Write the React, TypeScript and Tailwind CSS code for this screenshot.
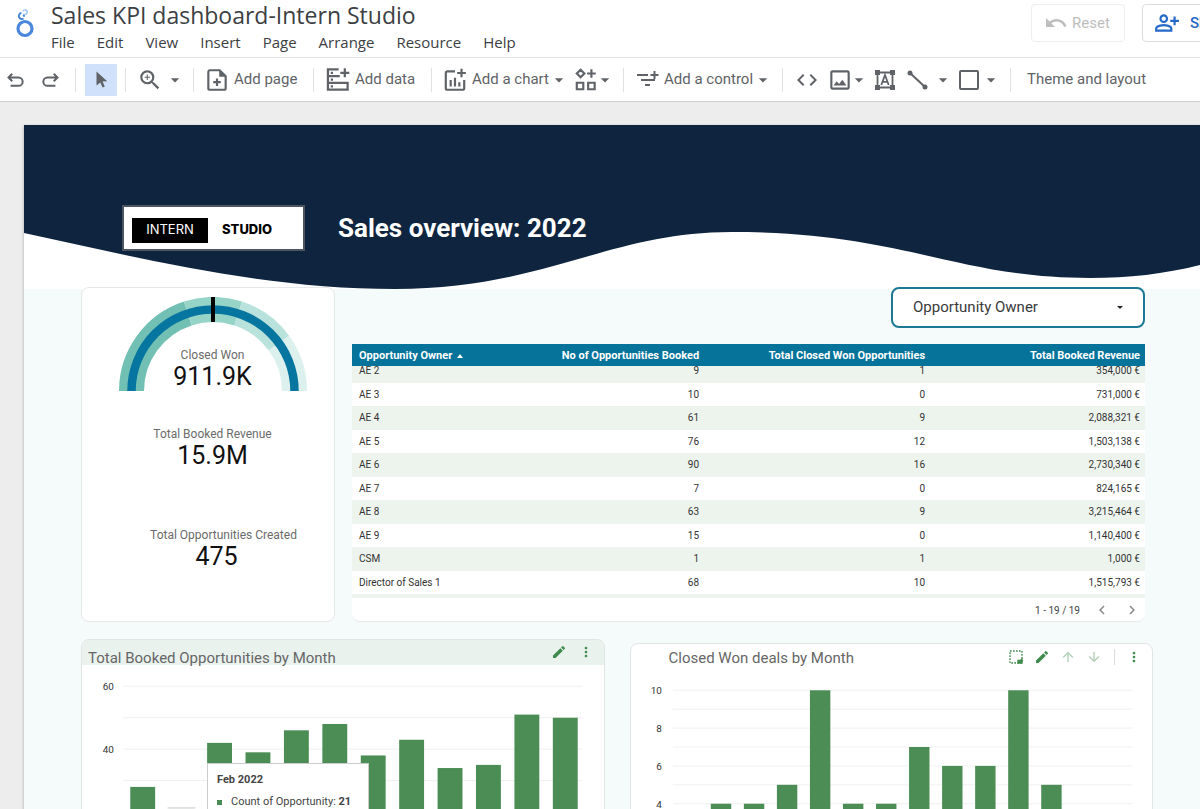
import { useLayoutEffect, useRef } from "react";
import type { ReactNode } from "react";
import {
  MdArrowDownward,
  MdArrowDropDown,
  MdArrowUpward,
  MdChevronLeft,
  MdChevronRight,
  MdCode,
  MdEdit,
  MdMoreVert,
  MdOutlineImage,
  MdOutlinePersonAddAlt,
  MdUndo,
  MdZoomIn,
} from "react-icons/md";

const menus = ["File", "Edit", "View", "Insert", "Page", "Arrange", "Resource", "Help"];

const rows = [
  ["AE 2", "9", "1", "354,000 €"],
  ["AE 3", "10", "0", "731,000 €"],
  ["AE 4", "61", "9", "2,088,321 €"],
  ["AE 5", "76", "12", "1,503,138 €"],
  ["AE 6", "90", "16", "2,730,340 €"],
  ["AE 7", "7", "0", "824,165 €"],
  ["AE 8", "63", "9", "3,215,464 €"],
  ["AE 9", "15", "0", "1,140,400 €"],
  ["CSM", "1", "1", "1,000 €"],
  ["Director of Sales 1", "68", "10", "1,515,793 €"],
];

const bookedByMonth = [28, 21, 42, 39, 46, 48, 38, 43, 34, 35, 51, 50];
const wonByMonth = [0, 4, 4, 5, 10, 4, 4, 7, 6, 6, 10, 5];

function Logo() {
  return (
    <svg className="h-8 w-6 shrink-0" viewBox="0 0 24 32" fill="none" aria-hidden="true">
      <circle cx="13" cy="20.500" r="7" stroke="#4a86dc" strokeWidth="3.2" />
      <path d="M11.600 10.500A3 3 0 1 1 9.500 5.100M11.300 6.500a3 3 0 0 1 .8 2.200" stroke="#4a86dc" strokeWidth="2" />
      <path d="M10.800 3.200a2.300 2.300 0 1 1 2 3.300" stroke="#9cc0f2" strokeWidth="1.400" />
    </svg>
  );
}

function Icon({ children, className = "size-6" }: { children: ReactNode; className?: string }) {
  return (
    <svg
      viewBox="0 0 24 24"
      fill="none"
      stroke="currentColor"
      strokeWidth="2"
      className={`shrink-0 ${className}`}
      aria-hidden="true"
    >
      {children}
    </svg>
  );
}

function Caret() {
  return <MdArrowDropDown className="-mx-1 size-5 shrink-0" />;
}

function Tool({ label, children, className = "" }: { label: string; children: ReactNode; className?: string }) {
  return (
    <button type="button" aria-label={label} className={`flex h-8 shrink-0 items-center whitespace-nowrap ${className}`}>
      {children}
    </button>
  );
}

function Divider() {
  return <span className="h-6 w-px shrink-0 bg-[#dfe1e3]" />;
}

function Toolbar() {
  return (
    <div className="flex h-11 items-center border-b border-[#cfcfcf] bg-white text-[15px] text-[#5f6368]">
      <div className="flex w-[75px] shrink-0 items-center gap-[14px] pl-[6px]">
        <Tool label="Undo">
          <Icon className="size-5">
            <path d="M7.5 4.500 3 9l4.500 4.500M3.500 9H15a5 5 0 0 1 0 10H5.500" strokeWidth="2.400" />
          </Icon>
        </Tool>
        <Tool label="Redo">
          <Icon className="size-5">
            <path d="M16.500 4.500 21 9l-4.500 4.500M20.500 9H9a5 5 0 0 0 0 10h9.500" strokeWidth="2.400" />
          </Icon>
        </Tool>
      </div>
      <Divider />
      <div className="flex w-[49px] shrink-0 justify-center">
        <Tool label="Select" className="w-8 justify-center bg-[#d0e1fb]">
          <Icon>
            <path d="M7.500 3.500v14l3.800-3 2.300 5 2.200-1-2.300-5 4.700-.3z" fill="currentColor" stroke="none" />
          </Icon>
        </Tool>
      </div>
      <Divider />
      <div className="flex w-[67px] shrink-0 items-center pl-[11px]">
        <Tool label="Zoom" className="gap-[6px]">
          <MdZoomIn className="size-[26px]" />
          <Caret />
        </Tool>
      </div>
      <Divider />
      <div className="flex w-[119px] shrink-0 items-center pl-[10px]">
        <Tool label="Add page" className="gap-1">
          <Icon className="size-[26px]">
            <path d="M14.500 3H5.500A1.500 1.500 0 0 0 4 4.500v15A1.500 1.500 0 0 0 5.500 21h13a1.500 1.500 0 0 0 1.500-1.500V8.500z" />
            <path d="M14 3v6h6z" fill="currentColor" stroke="none" />
            <path d="M12 10.500v7M8.500 14h7" />
          </Icon>
          Add page
        </Tool>
      </div>
      <Divider />
      <div className="flex w-[117px] shrink-0 items-center pl-[10px]">
        <Tool label="Add data" className="gap-1">
          <Icon className="size-[27px]">
            <path d="M13 3H3.500v18H21v-6H3.500M3.500 9H14" />
            <path d="M18.500 2v8M14.500 6h8" />
            <path d="M6 6h2M6 12h2M6 18h2" />
          </Icon>
          Add data
        </Tool>
      </div>
      <Divider />
      <div className="flex w-[191px] shrink-0 items-center gap-2 pl-[10px]">
        <Tool label="Add a chart" className="gap-1">
          <Icon className="size-[26px]">
            <path d="M12 4H5a1.500 1.500 0 0 0-1.500 1.500v14A1.500 1.500 0 0 0 5 21h14a1.500 1.500 0 0 0 1.500-1.500V12" />
            <path d="M18 1.500v8M14 5.500h8M8 12v6M12 10v8M16 14v4" />
          </Icon>
          Add a chart
          <Caret />
        </Tool>
        <Tool label="Community visualizations">
          <Icon className="size-[26px]">
            <path d="M7 2.500 10.500 6 7 9.500 3.500 6zM17 2v8M13 6h8M3.500 14.500H9.500v6H3.500zM14 14.500h6v6H14z" />
          </Icon>
          <Caret />
        </Tool>
      </div>
      <Divider />
      <div className="flex w-[158px] shrink-0 items-center pl-3">
        <Tool label="Add a control" className="gap-1">
          <Icon className="size-6">
            <path d="M1 7h11M5 12h14M9 17h5M18.500 3v8M14.500 7h8" />
          </Icon>
          Add a control
          <Caret />
        </Tool>
      </div>
      <Divider />
      <div className="flex w-[227px] shrink-0 items-center gap-2 pl-3">
        <Tool label="Embed URL">
          <MdCode className="size-6" />
        </Tool>
        <Tool label="Image">
          <MdOutlineImage className="size-[26px]" />
          <Caret />
        </Tool>
        <Tool label="Text">
          <Icon>
            <path d="M4.500 4.500h15v15h-15z" strokeWidth="1.800" />
            <path d="M2 2h5v5H2zM17 2h5v5h-5zM2 17h5v5H2zM17 17h5v5h-5z" fill="currentColor" stroke="none" />
            <path d="m8.300 17 3.700-10 3.700 10M9.500 13.800h5" strokeWidth="1.800" />
          </Icon>
        </Tool>
        <Tool label="Line" className="gap-2">
          <Icon>
            <path d="m5 5 15 14" />
            <circle cx="5" cy="5" r="2.500" fill="currentColor" stroke="none" />
            <circle cx="20" cy="19" r="2.500" fill="currentColor" stroke="none" />
          </Icon>
          <Caret />
        </Tool>
        <Tool label="Shape" className="gap-1">
          <Icon>
            <rect x="3" y="3" width="18" height="18" rx="1" />
          </Icon>
          <Caret />
        </Tool>
      </div>
      <Divider />
      <Tool label="Theme and layout" className="pl-4">
        Theme and layout
      </Tool>
    </div>
  );
}

function AppHeader() {
  return (
    <header className="flex h-[58px] items-start border-b border-[#e0e0e0] bg-white">
      <div className="flex shrink-0 pt-2 pl-3">
        <Logo />
      </div>
      <div className="flex min-w-0 flex-1 flex-col gap-[2px] pl-[15px]">
        <h1 className="font-['Open_Sans'] text-[23px] leading-[30px] whitespace-nowrap text-[#3c4043]">
          Sales KPI dashboard-Intern Studio
        </h1>
        <nav className="flex gap-[22px] font-['Open_Sans'] text-[15px] leading-5 text-[#3c4043]">
          {menus.map((m) => (
            <button type="button" key={m}>
              {m}
            </button>
          ))}
        </nav>
      </div>
      <div className="flex shrink-0 gap-[17px] overflow-hidden pt-1">
        <button
          type="button"
          disabled
          className="flex h-[38px] w-[94px] items-center gap-1 rounded border border-[#eeeeee] pl-3 text-[15px] text-[#bdbdbd]"
        >
          <MdUndo className="size-6" />
          Reset
        </button>
        <button
          type="button"
          className="-mr-8 flex h-[38px] w-[90px] items-center gap-[10px] rounded border border-[#dadce0] pl-[11px] text-[15px] font-medium text-[#2468c8]"
        >
          <MdOutlinePersonAddAlt className="size-[26px]" />
          Share
        </button>
      </div>
    </header>
  );
}

function polar(r: number, deg: number) {
  const a = (deg * Math.PI) / 180;
  return `${(94 + r * Math.cos(a)).toFixed(2)} ${(94 - r * Math.sin(a)).toFixed(2)}`;
}

function Arc({ r, from, to, width, color }: { r: number; from: number; to: number; width: number; color: string }) {
  return <path d={`M${polar(r, from)}A${r} ${r} 0 0 1 ${polar(r, to)}`} stroke={color} strokeWidth={width} fill="none" />;
}

function Gauge() {
  return (
    <svg viewBox="0 0 188 94" className="h-[94px] w-[188px] [grid-area:1/1]" aria-hidden="true">
      <Arc r={81.5} from={180} to={108} width={25} color="#72c0b4" />
      <Arc r={81.5} from={108} to={72} width={25} color="#96d4c8" />
      <Arc r={81.5} from={72} to={36} width={25} color="#b9e2dc" />
      <Arc r={81.5} from={36} to={0} width={25} color="#dcf0ed" />
      <Arc r={81.5} from={180} to={0} width={8.5} color="#06759f" />
      <path d="M94 0v25" stroke="#000" strokeWidth="4" />
    </svg>
  );
}

function Metric({ label, value, labelClass = "" }: { label: string; value: string; labelClass?: string }) {
  return (
    <div className="flex flex-col items-center">
      <span className={`text-[12px] leading-4 text-[#6b6b6b] ${labelClass}`}>{label}</span>
      <span className="text-[25px] leading-7 text-[#111111]">{value}</span>
    </div>
  );
}

function KpiCard() {
  return (
    <section className="flex w-[254px] shrink-0 flex-col items-center rounded-lg border border-[#e4e8e8] bg-white pt-[9px] pl-[9px]">
      <div className="grid items-end justify-items-center">
        <Gauge />
        <div className="[grid-area:1/1]">
          <Metric label="Closed Won" value="911.9K" />
        </div>
      </div>
      <div className="pt-[35px]">
        <Metric label="Total Booked Revenue" value="15.9M" />
      </div>
      <div className="pt-[57px] pl-[8px]">
        <Metric label="Total Opportunities Created" value="475" labelClass="pl-[14px]" />
      </div>
    </section>
  );
}

function OwnerTable() {
  const scroller = useRef<HTMLDivElement>(null);
  useLayoutEffect(() => {
    if (scroller.current) scroller.current.scrollTop = 7;
  }, []);
  const cell = "pb-0 pl-0 pr-[5px] text-right";
  const head = "bg-[#06739b] pt-[2px] font-bold whitespace-nowrap";
  return (
    <section className="overflow-hidden rounded-b-lg border-b border-[#e4e8e8] bg-white">
      <div ref={scroller} className="h-[254px] overflow-hidden">
        <table className="w-full table-fixed border-separate border-spacing-0 text-[10px] leading-3 text-[#333333]">
          <colgroup>
            <col className="w-[22%]" />
            <col className="w-[22.4%]" />
            <col className="w-[28.5%]" />
            <col className="w-[27.1%]" />
          </colgroup>
          <thead className="sticky top-0 text-[11px] text-white">
            <tr className="h-[22px]">
              <th className={`pr-0 pb-0 pl-[7px] text-left ${head}`}>
                <button type="button" className="flex items-center gap-[5px]">
                  Opportunity Owner
                  <svg viewBox="0 0 6 4" className="h-1 w-[6px]" aria-hidden="true">
                    <path d="M0 4 3 0l3 4z" fill="#fff" />
                  </svg>
                </button>
              </th>
              <th className={`${head} ${cell}`}>No of Opportunities Booked</th>
              <th className={`${head} ${cell}`}>Total Closed Won Opportunities</th>
              <th className={`${head} ${cell}`}>Total Booked Revenue</th>
            </tr>
          </thead>
          <tbody>
            {rows.map((r) => (
              <tr key={r[0]} className="h-6 odd:bg-[#edf3ed] even:h-[23px]">
                <td className="p-0 pl-[7px]">{r[0]}</td>
                <td className={`pt-0 ${cell}`}>{r[1]}</td>
                <td className={`pt-0 ${cell}`}>{r[2]}</td>
                <td className={`pt-0 ${cell}`}>{r[3]}</td>
              </tr>
            ))}
            <tr className="h-6 bg-[#edf3ed]">
              <td colSpan={4} className="p-0" />
            </tr>
          </tbody>
        </table>
      </div>
      <div className="flex h-[23px] items-center justify-end pt-px pr-1 text-[10px] text-[#444444]">
        <span className="pr-[13px]">1 - 19 / 19</span>
        <button type="button" aria-label="Previous page" className="mr-3 text-[#8a8a8a]">
          <MdChevronLeft className="size-[18px]" />
        </button>
        <button type="button" aria-label="Next page" className="text-[#8a8a8a]">
          <MdChevronRight className="size-[18px]" />
        </button>
      </div>
    </section>
  );
}

function OwnerFilter() {
  return (
    <div className="grid h-[41px] w-[254px] items-center self-end">
      <select
        aria-label="Opportunity Owner filter"
        className="h-full w-full appearance-none rounded-lg border-2 border-[#1d7893] bg-white pl-5 text-[15px] text-[#3a3a3a] [grid-area:1/1]"
      >
        <option>Opportunity Owner</option>
      </select>
      <svg viewBox="0 0 6 3" className="pointer-events-none mr-[22px] h-[3px] w-[6px] justify-self-end [grid-area:1/1]" aria-hidden="true">
        <path d="M0 0h6L3 3z" fill="#222" />
      </svg>
    </div>
  );
}

function BookedChart() {
  const y = (v: number) => 46.5 + (60 - v) * 3.16;
  return (
    <svg viewBox="0 0 524 260" className="block w-full" role="img" aria-label="Booked opportunities by month">
      {[60, 50, 40, 30, 20, 10, 0].map((v) => (
        <path key={v} d={`M41 ${y(v)}H503`} stroke="#f0f0f0" strokeWidth="1" />
      ))}
      {[60, 40, 20, 0].map((v) => (
        <text key={v} x="32" y={y(v) + 4} textAnchor="end" fontSize="10" fill="#333">
          {v}
        </text>
      ))}
      {bookedByMonth.map((v, i) => (
        <rect key={i} x={48.5 + i * 38.6} y={y(v)} width="25" height={v * 3.16} fill="#4b8d55" />
      ))}
      <path d={`M86 ${y(21) - 1}h28`} stroke="#cccccc" strokeWidth="1" />
    </svg>
  );
}

function WonChart() {
  const y = (v: number) => 46.5 + (10 - v) * 19;
  return (
    <svg viewBox="0 0 524 260" className="block w-full" role="img" aria-label="Closed won deals by month">
      {[10, 9, 8, 7, 6, 5, 4, 3, 2, 1, 0].map((v) => (
        <path key={v} d={`M42 ${y(v)}H504`} stroke="#f0f0f0" strokeWidth="1" />
      ))}
      {[10, 8, 6, 4, 2, 0].map((v) => (
        <text key={v} x="31" y={y(v) + 4} textAnchor="end" fontSize="10" fill="#333">
          {v}
        </text>
      ))}
      {wonByMonth.map((v, i) => (
        <rect key={i} x={47 + i * 33.2} y={y(v)} width="20.500" height={v * 19} fill="#4b8d55" />
      ))}
    </svg>
  );
}

function BookedCard() {
  return (
    <section className="grid grid-rows-[auto_1fr] overflow-hidden rounded-t-lg border border-[#dfe6e4] bg-white">
      <div className="flex h-[25px] items-start bg-[#eaf2ee] pl-[6px] [grid-area:1/1]">
        <h2 className="flex-1 pt-2 text-[15px] leading-5 text-[#666666]">Total Booked Opportunities by Month</h2>
        <div className="flex items-center gap-[11px] pt-1 pr-[10px] text-[#3f8a4d]">
          <button type="button" aria-label="Edit chart">
            <MdEdit className="size-4" />
          </button>
          <button type="button" aria-label="More options">
            <MdMoreVert className="size-4" />
          </button>
        </div>
      </div>
      <div className="relative -mt-[25px] [grid-area:2/1]">
        <BookedChart />
        <div className="absolute top-[123px] left-[125px] flex w-[162px] flex-col gap-2 border border-[#cccccc] bg-white px-[9px] pt-[9px] pb-3 text-[11px] leading-[14px] text-[#444444]">
          <strong>Feb 2022</strong>
          <span className="flex items-center whitespace-nowrap">
            <span className="mr-[9px] size-[5px] bg-[#4b8d55]" />
            Count of Opportunity:&nbsp;<b>21</b>
          </span>
        </div>
      </div>
    </section>
  );
}

function WonCard() {
  return (
    <section className="mt-1 grid overflow-hidden rounded-t-lg border border-[#dfe6e4] bg-white">
      <div className="[grid-area:1/1]">
        <WonChart />
      </div>
      <div className="flex h-[26px] items-center pr-[10px] pl-[38px] text-[#3f8a4d] [grid-area:1/1]">
        <h2 className="flex-1 pt-[2px] text-[15px] leading-5 text-[#666666]">Closed Won deals by Month</h2>
        <div className="flex items-center gap-[10px]">
          <button type="button" aria-label="Select data">
            <Icon className="size-4">
              <path d="M3 3h18v18H3z" strokeDasharray="2.500 2" strokeWidth="2" />
              <path d="M21 15v6h-6v-4h4z" fill="currentColor" />
            </Icon>
          </button>
          <button type="button" aria-label="Edit chart">
            <MdEdit className="size-4" />
          </button>
          <button type="button" aria-label="Drill up" className="opacity-40">
            <MdArrowUpward className="size-4" />
          </button>
          <button type="button" aria-label="Drill down" className="opacity-40">
            <MdArrowDownward className="size-4" />
          </button>
          <span className="mr-px ml-[2px] h-4 w-px bg-[#dddddd]" />
          <button type="button" aria-label="More options">
            <MdMoreVert className="size-4" />
          </button>
        </div>
      </div>
    </section>
  );
}

function ReportPage() {
  return (
    <main className="grid flex-1 grid-cols-1 bg-[#f5fafb] shadow-[0_1px_3px_rgba(0,0,0,0.3)]">
      <svg viewBox="0 0 1176 164" preserveAspectRatio="none" className="h-[164px] w-full bg-white [grid-area:1/1]" aria-hidden="true">
        <path
          d="M0 0H1176V140C1140 149 1105 153 1066 153C930 153 880 107 707 107C585 107 520 164 371 164C240 164 120 134 0 108Z"
          fill="#0f253f"
        />
      </svg>
      <div className="flex flex-col pr-[47px] pl-[57px] [grid-area:1/1]">
        <div className="flex h-[162px] items-start gap-[33px] pt-20 pl-[41px]">
          <div className="flex h-[46px] w-[183px] items-center border-2 border-[#4c5560] bg-white pt-1 pl-2 font-['Inter'] text-[13px] text-black">
            <span className="flex h-[25px] w-[76px] items-center justify-center bg-black text-white">INTERN</span>
            <span className="pl-[14px] font-extrabold">STUDIO</span>
          </div>
          <h2 className="pt-[7px] text-[26px] leading-8 font-bold text-white">Sales overview: 2022</h2>
        </div>
        <div className="mr-2 flex gap-[17px]">
          <KpiCard />
          <div className="flex min-w-0 flex-1 flex-col gap-4">
            <OwnerFilter />
            <OwnerTable />
          </div>
        </div>
        <div className="mt-[17px] grid grid-cols-2 items-start gap-[25px]">
          <BookedCard />
          <WonCard />
        </div>
      </div>
    </main>
  );
}

export default function App() {
  return (
    <div className="flex h-screen flex-col overflow-hidden bg-[#ededed] font-['Roboto','Liberation_Sans',sans-serif]">
      <div className="shrink-0">
        <AppHeader />
        <Toolbar />
      </div>
      <div className="flex min-h-0 flex-1 items-start overflow-hidden pt-[23px] pl-6">
        <ReportPage />
      </div>
    </div>
  );
}
